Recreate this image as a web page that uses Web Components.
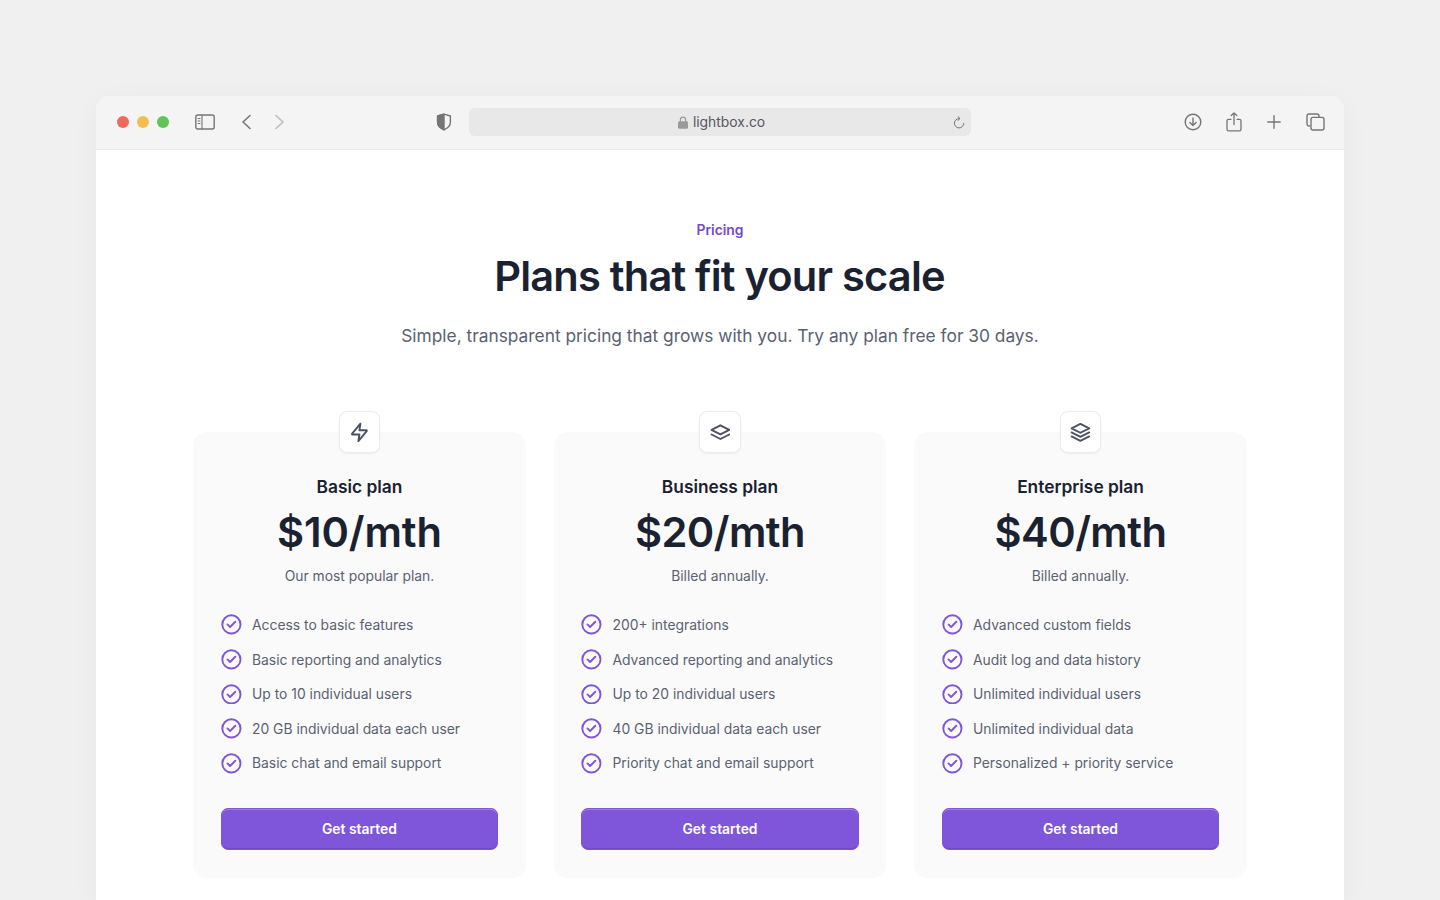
<!DOCTYPE html>
<html lang="en"><head><meta charset="utf-8"><title>Pricing</title>
<style>
html,body{margin:0;height:900px;overflow:hidden;background:#f0f0f0;font-family:Inter,"Liberation Sans",sans-serif}
body{box-sizing:border-box;padding:96px 96px 0}
</style></head><body>
<browser-window url="lightbox.co">
  <pricing-header eyebrow="Pricing" title-text="Plans that fit your scale" sub="Simple, transparent pricing that grows with you. Try any plan free for 30 days."></pricing-header>
  <plan-grid>
    <plan-card icon="zap" name="Basic plan" price="$10/mth" tracking="-.1px" desc="Our most popular plan." features="Access to basic features|Basic reporting and analytics|Up to 10 individual users|20 GB individual data each user|Basic chat and email support"></plan-card>
    <plan-card icon="two" name="Business plan" price="$20/mth" desc="Billed annually." features="200+ integrations|Advanced reporting and analytics|Up to 20 individual users|40 GB individual data each user|Priority chat and email support"></plan-card>
    <plan-card icon="three" name="Enterprise plan" price="$40/mth" desc="Billed annually." features="Advanced custom fields|Audit log and data history|Unlimited individual users|Unlimited individual data|Personalized + priority service"></plan-card>
  </plan-grid>
</browser-window>
<script>
const ICONS={
 zap:'<path d="M13.2 2 3.6 13.4c-.4.5-.2 1 .4 1H12l-1.2 7.6 9.6-11.4c.4-.5.2-1-.4-1H12L13.2 2z"/>',
 two:'<path d="M12 3.8 1.8 9 12 14.2 22.2 9 12 3.8z"/><path d="M1.8 14.4 12 19.6l10.2-5.2"/>',
 three:'<path d="M12 2.2 1.8 7.3 12 12.4l10.2-5.1L12 2.2z"/><path d="M1.8 12 12 17.1 22.2 12"/><path d="M1.8 16.7 12 21.8l10.2-5.1"/>'
};
class BrowserWindow extends HTMLElement{
 constructor(){super();const u=this.getAttribute('url');this.attachShadow({mode:'open'}).innerHTML=`<style>
 :host{display:block;width:1248px;height:804px;background:#fff;border-radius:14px 14px 0 0;box-shadow:0 6px 28px rgba(0,0,0,.045);overflow:hidden}
 .bar{height:52px;padding-bottom:1px;background:#f4f4f4;border-bottom:1px solid #ebebeb;display:flex;align-items:center;box-sizing:content-box}
 .dot{width:12px;height:12px;border-radius:50%;margin-right:8px;flex:none}
 svg{display:block;flex:none;fill:none;stroke:#757575;stroke-linecap:round;stroke-linejoin:round}
 .url{width:502px;height:28px;box-sizing:border-box;padding-left:3px;border-radius:6px;background:#e8e8e8;display:flex;align-items:center;justify-content:center;position:relative;margin-left:17px;font:400 13.87px/28px Inter,"Liberation Sans",sans-serif;color:#55575f}
 .url .lock{margin-right:5px}
 .reload{position:absolute;right:6px;top:8px}
 main{display:block}
 </style>
 <div class="bar">
  <span class="dot" style="background:#ee6a5f;margin-left:21px"></span><span class="dot" style="background:#f5bd4f"></span><span class="dot" style="background:#61c454;margin-right:0"></span>
  <svg style="margin-left:26px" width="20" height="16" viewBox="0 0 20 16" stroke-width="1.4"><rect x=".8" y="1" width="18.4" height="14" rx="2"/><path d="M7 1v14M3 4.5h2M3 7h2M3 9.5h2" stroke-width="1.1"/></svg>
  <svg style="margin-left:26px" width="11" height="16" viewBox="0 0 11 16" stroke-width="1.6"><path d="M9 1.5 2 8l7 6.5"/></svg>
  <svg style="margin-left:22px;stroke:#bcbcbc" width="11" height="16" viewBox="0 0 11 16" stroke-width="1.6"><path d="M2 1.5 9 8l-7 6.5"/></svg>
  <svg style="margin-left:151px" width="16" height="18" viewBox="0 0 16 18" stroke-width="1.4"><path d="M8 1.2 1.6 3v6c0 3.6 3 6.4 6.4 7.8 3.4-1.4 6.4-4.2 6.4-7.8V3L8 1.2z"/><path d="M8 1.2 1.6 3v6c0 3.6 3 6.4 6.4 7.8V1.2z" fill="#757575"/></svg>
  <div class="url">
   <svg class="lock" style="stroke:none" width="10" height="13" viewBox="0 0 10 13"><path d="M2.4 5.5V3.7a2.6 2.6 0 0 1 5.2 0v1.8" fill="none" stroke="#9a9a9a" stroke-width="1.2"/><rect y="5.2" width="10" height="7.6" rx="1.4" fill="#9a9a9a"/></svg>
   <span>${u}</span>
   <svg class="reload" width="12" height="13" viewBox="0 0 12 13" stroke-width="1"><path d="M6.2 2.5A4.7 4.7 0 1 0 10.8 7.3"/><path d="M5 .6l2 1.9-2 1.9" /></svg>
  </div>
  <svg style="margin-left:212.5px" width="18" height="18" viewBox="0 0 18 18" stroke-width="1.4"><circle cx="9" cy="9" r="7.8"/><path d="M9 5v7.6M5.9 9.6 9 12.6l3.1-3"/></svg>
  <svg style="margin-left:24px" width="16" height="20" viewBox="0 0 16 20" stroke-width="1.3"><path d="M5 7.3H2.6A1.6 1.6 0 0 0 1 8.9v8.4a1.6 1.6 0 0 0 1.6 1.6h10.8a1.6 1.6 0 0 0 1.6-1.6V8.9a1.6 1.6 0 0 0-1.6-1.6H11"/><path d="M8 12.5V1M5.2 3.6 8 1l2.8 2.6"/></svg>
  <svg style="margin-left:25.5px" width="14" height="14" viewBox="0 0 14 14" stroke-width="1.4"><path d="M7 .8v12.4M.8 7h12.4"/></svg>
  <svg style="margin-left:25px" width="19" height="18" viewBox="0 0 19 18" stroke-width="1.4"><path d="M3.6 13H3a2 2 0 0 1-2-2V3a2 2 0 0 1 2-2h8a2 2 0 0 1 2 2v1"/><rect x="5" y="4.4" width="13" height="12.6" rx="2"/></svg>
 </div>
 <main><slot></slot></main>`;}
}
class PricingHeader extends HTMLElement{
 constructor(){super();const a=n=>this.getAttribute(n);this.attachShadow({mode:'open'}).innerHTML=`<style>
 :host{display:block;text-align:center;padding-top:69.8px;font-family:Inter,"Liberation Sans",sans-serif}
 .e{font-size:13.87px;line-height:20.8px;font-weight:600;color:#7148cf;margin-bottom:9.9px}
 h1{margin:0 0 20.8px;padding-right:1px;font-size:41.6px;line-height:52px;font-weight:600;letter-spacing:-.79px;color:#1a2130}
 p{margin:0;font-size:17.33px;line-height:26px;color:#5a6272}
 </style><div class="e">${a('eyebrow')}</div><h1>${a('title-text')}</h1><p>${a('sub')}</p>`;}
}
class PlanGrid extends HTMLElement{
 constructor(){super();this.attachShadow({mode:'open'}).innerHTML=`<style>
 :host{display:grid;grid-template-columns:repeat(3,332.8px);column-gap:27.73px;justify-content:center;padding-top:83px}
 </style><slot></slot>`;}
}
class PlanIcon extends HTMLElement{
 constructor(){super();this.attachShadow({mode:'open'}).innerHTML=`<style>
 :host{position:absolute;top:-20.8px;left:50%;margin-left:-20.8px;width:41.6px;height:41.6px;box-sizing:border-box;background:#fff;border:1px solid #eaecf0;border-radius:8px;box-shadow:0 1px 2px rgba(16,24,40,.05);display:flex;align-items:center;justify-content:center}
 svg{width:20.8px;height:20.8px;fill:none;stroke:#4b5262;stroke-width:2.2;stroke-linecap:round;stroke-linejoin:round}
 </style><svg viewBox="0 0 24 24">${ICONS[this.getAttribute('name')]}</svg>`;}
}
class FeatureItem extends HTMLElement{
 constructor(){super();this.attachShadow({mode:'open'}).innerHTML=`<style>
 :host{display:flex;align-items:center;gap:10.4px;height:20.8px;font-size:13.87px;line-height:20.8px;color:#5a6272}
 svg{width:20.8px;height:20.8px;margin-top:-1px;flex:none;fill:none;stroke:#7f56d9;stroke-width:2.2;stroke-linecap:round;stroke-linejoin:round}
 </style><svg viewBox="0 0 24 24"><circle cx="12" cy="12" r="10.5"/><path d="M7.5 12l3 3 6-6"/></svg><span><slot></slot></span>`;}
}
class PlanCard extends HTMLElement{
 constructor(){super();const a=n=>this.getAttribute(n);this.attachShadow({mode:'open'}).innerHTML=`<style>
 :host{display:flex;flex-direction:column;position:relative;box-sizing:border-box;height:446px;padding:41.8px 27.73px 27.73px;background:#fafafa;border-radius:13.87px;text-align:center;font-family:Inter,"Liberation Sans",sans-serif}
 h2{margin:0 0 6.4px;font-size:17.33px;line-height:26px;font-weight:600;color:#1a2130}
 .price{font-size:41.6px;line-height:52px;font-weight:600;letter-spacing:${a('tracking')||'-.55px'};color:#1a2130;margin-bottom:7.6px}
 .desc{font-size:13.87px;line-height:20.8px;color:#5a6272;margin-bottom:28px}
 .list{display:flex;flex-direction:column;gap:13.87px;text-align:left;margin-bottom:34.1px}
 button{display:block;width:100%;height:41.6px;border:1px solid #7f56d9;border-radius:6.93px;background:#7f56d9;box-shadow:inset 0 1px 0 rgba(255,255,255,.25),inset 0 -1px 0 rgba(60,30,130,.2);color:#fff;font:600 13.87px/20.8px Inter,"Liberation Sans",sans-serif;letter-spacing:.02px;padding:0}
 </style>
 <plan-icon name="${a('icon')}"></plan-icon>
 <h2>${a('name')}</h2><div class="price">${a('price')}</div><div class="desc">${a('desc')}</div>
 <div class="list">${a('features').split('|').map(f=>`<feature-item>${f}</feature-item>`).join('')}</div>
 <button>Get started</button>`;}
}
customElements.define('plan-icon',PlanIcon);
customElements.define('feature-item',FeatureItem);
customElements.define('plan-card',PlanCard);
customElements.define('plan-grid',PlanGrid);
customElements.define('pricing-header',PricingHeader);
customElements.define('browser-window',BrowserWindow);
</script>
</body></html>
